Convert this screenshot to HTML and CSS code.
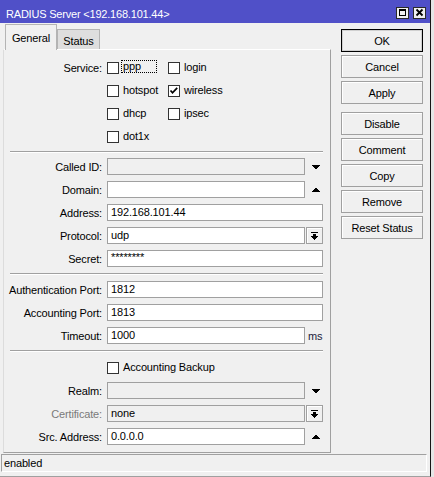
FILE: index.html
```html
<!DOCTYPE html>
<html>
<head>
<meta charset="utf-8">
<link rel="stylesheet" href="styles.css">
</head>
<body>
<div class="window">
  <div class="titlebar">
    <span class="title">RADIUS Server &lt;192.168.101.44&gt;</span>
    <div class="tb-buttons">
      <svg class="tb-btn" width="13" height="12" viewBox="0 0 13 12"><rect x="0.5" y="0.5" width="12" height="11" fill="#f0f0f0" stroke="#2a2a2a"/><rect x="3.5" y="2.5" width="6" height="6" fill="none" stroke="#000"/><rect x="3" y="2" width="7" height="2" fill="#000"/></svg>
      <svg class="tb-btn" width="13" height="12" viewBox="0 0 13 12"><rect x="0.5" y="0.5" width="12" height="11" fill="#f0f0f0" stroke="#2a2a2a"/><path d="M3.5 2.5L9.5 8.5M9.5 2.5L3.5 8.5" stroke="#000" stroke-width="1.8"/></svg>
    </div>
  </div>
  <div class="main">
    <div class="left">
      <div class="tabs">
        <div class="tab active">General</div>
        <div class="tab">Status</div>
      </div>
      <div class="panel">
        <div class="row">
          <span class="lbl">Service:</span>
          <span class="cbitem"><span class="cb"></span><span class="cbtext focus">ppp</span></span>
          <span class="cbitem"><span class="cb"></span><span class="cbtext">login</span></span>
        </div>
        <div class="row">
          <span class="lbl"></span>
          <span class="cbitem"><span class="cb"></span><span class="cbtext">hotspot</span></span>
          <span class="cbitem"><span class="cb"><svg width="10" height="10" viewBox="0 0 10 10"><polyline points="1.5,4.5 3.5,6.8 8.2,1.8" fill="none" stroke="#000" stroke-width="1.7"/></svg></span><span class="cbtext">wireless</span></span>
        </div>
        <div class="row">
          <span class="lbl"></span>
          <span class="cbitem"><span class="cb"></span><span class="cbtext">dhcp</span></span>
          <span class="cbitem"><span class="cb"></span><span class="cbtext">ipsec</span></span>
        </div>
        <div class="row">
          <span class="lbl"></span>
          <span class="cbitem"><span class="cb"></span><span class="cbtext">dot1x</span></span>
        </div>

        <div class="sep sep1"></div>

        <div class="row">
          <span class="lbl">Called ID:</span>
          <span class="field short disabled"></span>
          <span class="arrow"><svg width="8" height="4" viewBox="0 0 8 4"><path d="M0 0h8v1h-1v1h-1v1h-1v1h-2v-1h-1v-1h-1v-1h-1z"/></svg></span>
        </div>
        <div class="row">
          <span class="lbl">Domain:</span>
          <span class="field short"></span>
          <span class="arrow"><svg width="8" height="4" viewBox="0 0 8 4"><path d="M0 4h8v-1h-1v-1h-1v-1h-1v-1h-2v1h-1v1h-1v1h-1z"/></svg></span>
        </div>
        <div class="row">
          <span class="lbl">Address:</span>
          <span class="field full">192.168.101.44</span>
        </div>
        <div class="row">
          <span class="lbl">Protocol:</span>
          <span class="field short">udp</span>
          <span class="dbtn"><svg width="7" height="8" viewBox="0 0 7 8"><rect x="0" y="0" width="7" height="1"/><rect x="2" y="2" width="3" height="2"/><path d="M0 4h7v1h-1v1h-1v1h-1v1h-1v-1h-1v-1h-1v-1h-1z"/></svg></span>
        </div>
        <div class="row">
          <span class="lbl">Secret:</span>
          <span class="field full secret">********</span>
        </div>

        <div class="sep sep2"></div>

        <div class="row">
          <span class="lbl">Authentication Port:</span>
          <span class="field full">1812</span>
        </div>
        <div class="row">
          <span class="lbl">Accounting Port:</span>
          <span class="field full">1813</span>
        </div>
        <div class="row">
          <span class="lbl">Timeout:</span>
          <span class="field short">1000</span>
          <span class="unit">ms</span>
        </div>

        <div class="sep sep3"></div>

        <div class="row">
          <span class="lbl"></span>
          <span class="cbitem wide"><span class="cb"></span><span class="cbtext">Accounting Backup</span></span>
        </div>
        <div class="row">
          <span class="lbl">Realm:</span>
          <span class="field short disabled"></span>
          <span class="arrow"><svg width="8" height="4" viewBox="0 0 8 4"><path d="M0 0h8v1h-1v1h-1v1h-1v1h-2v-1h-1v-1h-1v-1h-1z"/></svg></span>
        </div>
        <div class="row">
          <span class="lbl grey">Certificate:</span>
          <span class="field short disabled">none</span>
          <span class="dbtn"><svg width="7" height="8" viewBox="0 0 7 8"><rect x="0" y="0" width="7" height="1"/><rect x="2" y="2" width="3" height="2"/><path d="M0 4h7v1h-1v1h-1v1h-1v1h-1v-1h-1v-1h-1v-1h-1z"/></svg></span>
        </div>
        <div class="row">
          <span class="lbl">Src. Address:</span>
          <span class="field short">0.0.0.0</span>
          <span class="arrow"><svg width="8" height="4" viewBox="0 0 8 4"><path d="M0 4h8v-1h-1v-1h-1v-1h-1v-1h-2v1h-1v1h-1v1h-1z"/></svg></span>
        </div>
      </div>
    </div>
    <div class="btns">
      <div class="btn default">OK</div>
      <div class="btn">Cancel</div>
      <div class="btn">Apply</div>
      <div class="btn spaced">Disable</div>
      <div class="btn">Comment</div>
      <div class="btn">Copy</div>
      <div class="btn">Remove</div>
      <div class="btn">Reset Status</div>
    </div>
  </div>
  <div class="statusbar">enabled</div>
</div>
</body>
</html>
```

FILE: styles.css
```css
* { box-sizing: border-box; }

body {
  margin: 0;
  background: #e6e6e6;
  font-family: "Liberation Sans", Arial, sans-serif;
  font-size: 11px;
  letter-spacing: -0.15px;
  color: #000;
}

.window {
  width: 431px;
  height: 477px;
  background: #f0f0f0;
  border-right: 1px solid #161616;
  border-bottom: 1px solid #a0a0a0;
  display: flex;
  flex-direction: column;
}

.titlebar {
  height: 23px;
  flex: none;
  background: #5050c8;
  color: #fff;
  display: flex;
  align-items: flex-start;
  padding: 0 4px 0 6px;
}

.title {
  flex: 1;
  margin-top: 8px;
  line-height: 13px;
  font-size: 11px;
  letter-spacing: -0.2px;
  white-space: nowrap;
}

.tb-buttons {
  display: flex;
  gap: 4px;
  margin-top: 7px;
}

.tb-btn { display: block; }

.main {
  height: 431px;
  flex: none;
  display: flex;
}

.left {
  width: 328px;
  margin-left: 3px;
  padding-bottom: 1px;
  display: flex;
  flex-direction: column;
}

.tabs {
  display: flex;
  align-items: flex-end;
  height: 25px;
  margin-top: 1px;
  padding-left: 2px;
  flex: none;
}

.tab {
  width: 43px;
  height: 20px;
  border: 1px solid #b4b4b4;
  border-bottom: none;
  background: #dedede;
  display: flex;
  align-items: center;
  justify-content: center;
  padding-top: 2px;
}

.tab.active {
  width: 52px;
  height: 26px;
  margin-bottom: -1px;
  background: #f0f0f0;
  position: relative;
  z-index: 1;
  padding-top: 0;
}

.panel {
  flex: 1;
  border: 1px solid #a0a0a0;
  border-top-color: #fff;
  border-left-color: #dcdcdc;
  padding-top: 6px;
}

.row {
  display: flex;
  align-items: center;
  height: 23px;
}

.lbl {
  width: 98px;
  margin-right: 5px;
  text-align: right;
  white-space: nowrap;
  flex: none;
}

.lbl.grey { color: #7a7a7a; }

.cbitem {
  width: 61px;
  display: flex;
  align-items: center;
  flex: none;
}

.cbitem.wide { width: 200px; }

.cb {
  width: 12px;
  height: 12px;
  border: 1px solid #333;
  background: #fff;
  flex: none;
  display: flex;
  align-items: center;
  justify-content: center;
}

.cb svg { display: block; }

.cbtext {
  margin-left: 2px;
  padding: 0 1px;
  border: 1px dotted transparent;
  line-height: 11px;
  white-space: nowrap;
}

.cbtext.focus {
  border-color: #000;
  width: 36px;
  margin-top: -3px;
}

.field {
  height: 17px;
  border: 1px solid #a0a0a0;
  background: #fff;
  padding-left: 3px;
  line-height: 15px;
  white-space: nowrap;
  overflow: hidden;
  flex: none;
}

.field.full { width: 216px; }
.field.short { width: 198px; }
.field.disabled { background: #f0f0f0; }
.field.secret { line-height: 13px; }

.arrow {
  width: 18px;
  padding-left: 7px;
  display: flex;
  align-items: center;
  flex: none;
}

.arrow svg, .dbtn svg { display: block; }

.dbtn {
  width: 17px;
  height: 17px;
  margin-left: 1px;
  border: 1px solid #a0a0a0;
  background: #f0f0f0;
  box-shadow: inset 1px 1px 0 #fff;
  display: flex;
  align-items: center;
  justify-content: center;
  flex: none;
}

.unit {
  margin-left: 3px;
  color: #1c1c3c;
}

.sep {
  height: 2px;
  border-top: 1px solid #a0a0a0;
  border-bottom: 1px solid #fff;
  margin: 3px 7px 2px 6px;
}

.sep2 { margin-bottom: 3px; }
.sep3 { margin-bottom: 4px; }

.btns {
  width: 82px;
  margin-left: 10px;
  padding-top: 6px;
  display: flex;
  flex-direction: column;
  gap: 3px;
}

.btn {
  height: 23px;
  border: 1px solid #a0a0a0;
  background: #f0f0f0;
  box-shadow: inset 1px 1px 0 #fff;
  display: flex;
  align-items: center;
  justify-content: center;
  white-space: nowrap;
}

.btn.default {
  border-color: #000;
  box-shadow: inset 0 0 0 1px #d0d0d0;
}

.btn.spaced { margin-top: 5px; }

.statusbar {
  height: 18px;
  flex: none;
  margin: 0 3px 0 1px;
  border: 1px solid;
  border-color: #a0a0a0 #fff #fff #a0a0a0;
  padding-left: 2px;
  line-height: 16px;
}
```
